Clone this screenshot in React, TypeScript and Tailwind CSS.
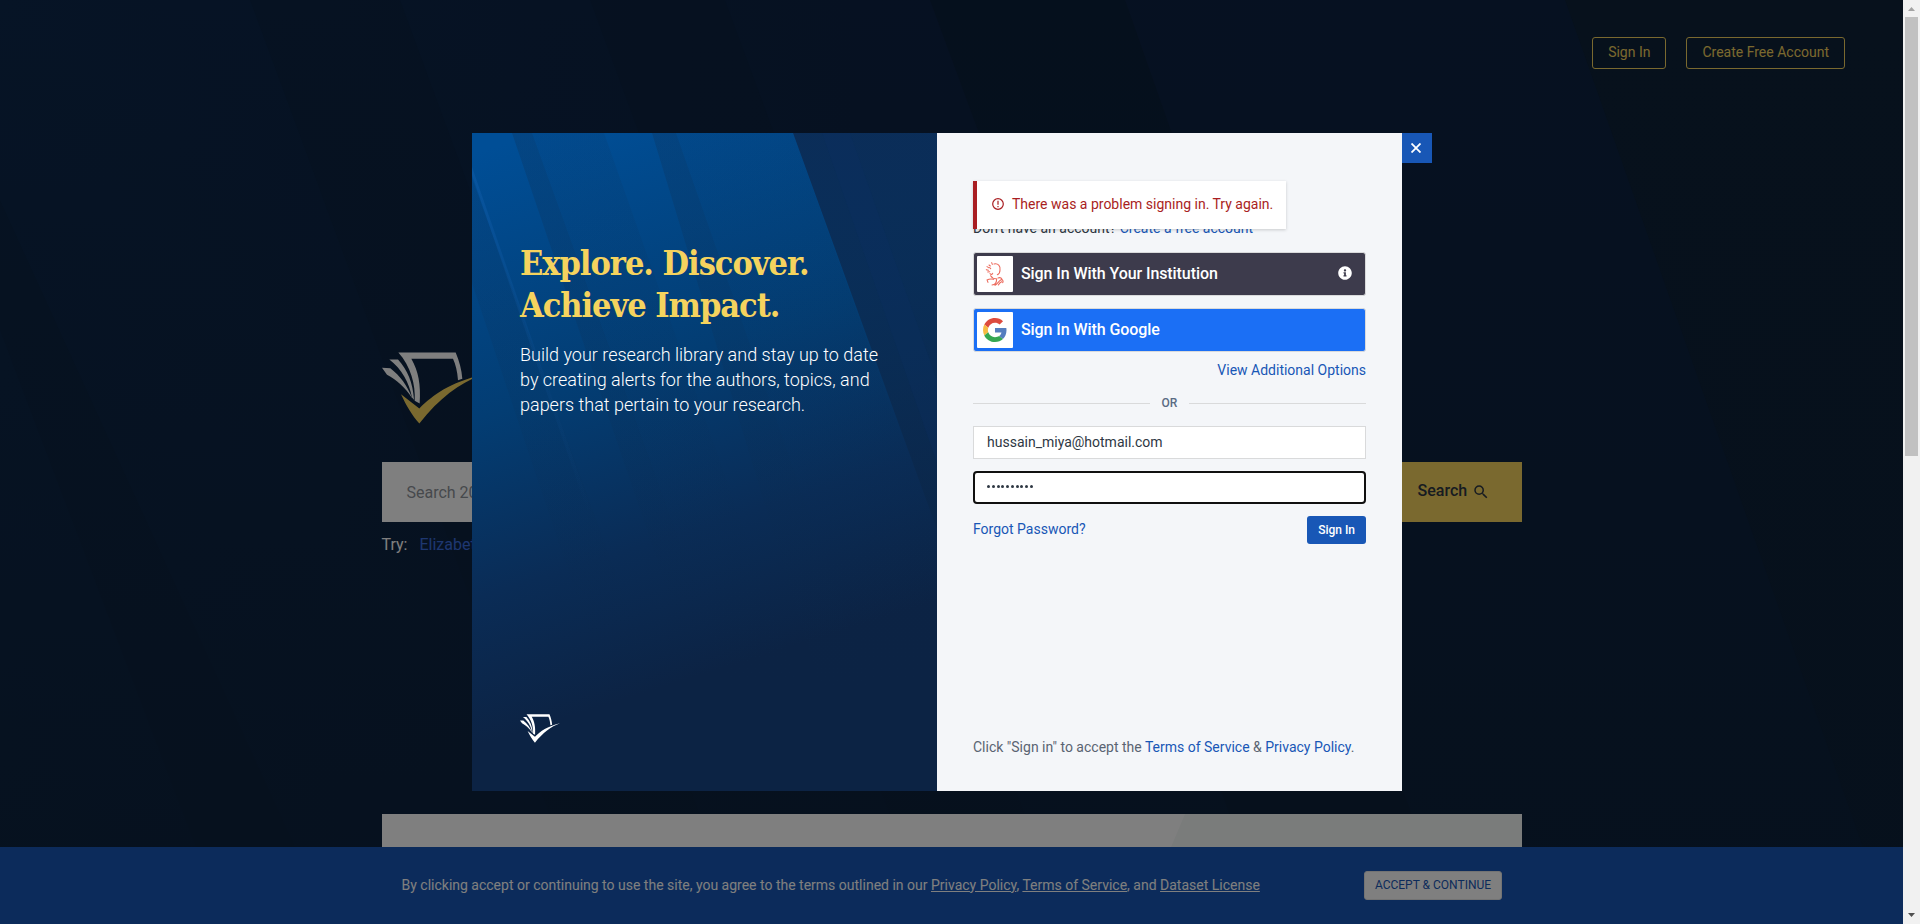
import type { ReactNode } from "react";
import { FaInfoCircle } from "react-icons/fa";
import { MdSearch } from "react-icons/md";

function Logo({ className, check }: { className: string; check: string }) {
  return (
    <svg className={className} viewBox="36 68 300 215" fill="white">
      <path d="M85 69 L257 69 C268 95 275 120 277 148 L264 152 C262 125 257 105 249 88 L124 88 C145 125 153 165 149 222 L134 214 C137 165 122 110 85 69Z" />
      <path d="M58 90 L84 90 C112 120 129 160 132 211 L126 204 C118 160 95 118 58 90Z" />
      <path d="M36 115 L61 116 C90 138 112 168 127 207 C104 172 80 152 51 136 Z" />
      <path fill={check} d="M93 194 L148 237 C190 195 240 160 335 136 C268 162 208 206 148 282 C125 255 110 230 93 194Z" />
    </svg>
  );
}

function GoogleMark() {
  return (
    <svg className="size-6" viewBox="0 0 48 48">
      <path fill="#dd4b3e" d="M24 9.5c3.54 0 6.71 1.22 9.21 3.6l6.85-6.85C35.9 2.38 30.47 0 24 0 14.62 0 6.51 5.38 2.56 13.22l7.98 6.19C12.43 13.72 17.74 9.5 24 9.5z" />
      <path fill="#557ebf" d="M46.98 24.55c0-1.57-.15-3.09-.38-4.55H24v9.02h12.94c-.58 2.96-2.26 5.48-4.78 7.18l7.73 6c4.51-4.18 7.09-10.36 7.09-17.65z" />
      <path fill="#f6bb42" d="M10.53 28.59c-.48-1.45-.76-2.99-.76-4.59s.27-3.14.76-4.59l-7.98-6.19C.92 16.46 0 20.12 0 24c0 3.88.92 7.54 2.56 10.78l7.97-6.19z" />
      <path fill="#36a752" d="M24 48c6.48 0 11.93-2.13 15.89-5.81l-7.73-6c-2.15 1.45-4.92 2.3-8.16 2.3-6.26 0-11.57-4.22-13.47-9.91l-7.98 6.19C6.51 42.62 14.62 48 24 48z" />
    </svg>
  );
}

function InstitutionMark() {
  return (
    <svg className="h-6 w-5" viewBox="0 0 54 72" fill="none" stroke="#ec6a5c" strokeWidth="3.2" strokeLinecap="round">
      <path d="M24 6 C36 3 44 12 42 24 C42 32 39 36 34 38" />
      <path d="M17 2 L19 7 M9 9 L13 12 M3 14 L8 17 M11 17 L14 20 M1 23 L7 25 M5 30 L11 29" />
      <path d="M12 35 C15 38 19 38 20 34 M14 41 C18 48 22 50 30 50" />
      <path d="M3 54 C10 50 16 50 23 52 M4 56 L6 61" />
      <path d="M18 69 C28 68 32 60 32 50 M27 70 C34 66 38 58 44 54 C49 50 53 58 50 62 M37 69 C40 64 43 60 47 59 M36 48 C41 46 46 48 48 52" />
    </svg>
  );
}

function PanelBackdrop() {
  return (
    <svg className="absolute inset-0 size-full" viewBox="0 0 465 658" preserveAspectRatio="none">
      <defs>
        <linearGradient id="panel" gradientUnits="userSpaceOnUse" x1="130" y1="-20" x2="300" y2="520">
          <stop offset="0" stopColor="#004e96" />
          <stop offset="0.45" stopColor="#033d73" />
          <stop offset="0.75" stopColor="#0a2c56" />
          <stop offset="1" stopColor="#0c2344" />
        </linearGradient>
        <linearGradient id="edge" x1="0" y1="0" x2="0" y2="1">
          <stop offset="0" stopColor="#0b2c56" stopOpacity="0.95" />
          <stop offset="0.6" stopColor="#0b2647" stopOpacity="0.6" />
          <stop offset="1" stopColor="#0b2344" stopOpacity="0" />
        </linearGradient>
        <linearGradient id="stripe" x1="0" y1="0" x2="0" y2="1">
          <stop offset="0" stopColor="#0b3560" stopOpacity="0.35" />
          <stop offset="1" stopColor="#0b2748" stopOpacity="0" />
        </linearGradient>
        <linearGradient id="glint" x1="0" y1="0" x2="0" y2="1">
          <stop offset="0" stopColor="#1560ae" stopOpacity="0.4" />
          <stop offset="0.6" stopColor="#1560ae" stopOpacity="0.12" />
          <stop offset="1" stopColor="#1560ae" stopOpacity="0" />
        </linearGradient>
      </defs>
      <rect width="465" height="658" fill="url(#panel)" />
      <polygon points="321,0 465,0 465,400 560,658" fill="url(#edge)" />
      <polygon points="40,0 60,0 240,500 210,500" fill="url(#stripe)" />
      <polygon points="60,0 132,0 330,560 260,560" fill="url(#stripe)" opacity="0.45" />
      <polygon points="180,0 204,0 400,560 350,560" fill="url(#stripe)" />
      <polygon points="204,0 321,0 520,560 400,560" fill="url(#stripe)" opacity="0.4" />
      <polygon points="0,150 0,45 180,540 130,540" fill="url(#stripe)" opacity="0.7" />
      <polygon points="0,42 0,34 120,380 116,380" fill="url(#glint)" />
      <polygon points="350,0 378,0 480,290 465,330" fill="#0d2f62" opacity="0.25" />
    </svg>
  );
}

function PageBackdrop() {
  return (
    <svg className="absolute inset-0 size-full" viewBox="0 0 1903 924" preserveAspectRatio="none">
      <defs>
        <linearGradient id="page" x1="0" y1="0" x2="1" y2="0">
          <stop offset="0" stopColor="#0d284c" />
          <stop offset="0.45" stopColor="#0d2344" />
          <stop offset="1" stopColor="#0d2342" />
        </linearGradient>
        <linearGradient id="fade" x1="0" y1="0" x2="0" y2="1">
          <stop offset="0" stopColor="#0d2138" stopOpacity="0" />
          <stop offset="1" stopColor="#0d2138" stopOpacity="0.7" />
        </linearGradient>
      </defs>
      <rect width="1903" height="924" fill="url(#page)" />
      <polygon points="930,0 1125,0 1450,924 1270,924" fill="#0c2036" opacity="0.7" />
      <polygon points="1565,0 1903,0 1903,924 1890,924" fill="#0e2238" />
      <polygon points="250,0 400,0 740,924 590,924" fill="#0b2038" opacity="0.3" />
      <polygon points="590,0 725,0 1065,924 930,924" fill="#0b2038" opacity="0.3" />
      <polygon points="0,200 0,330 225,924 330,924" fill="#0b2038" opacity="0.3" />
      <rect width="1903" height="924" fill="url(#fade)" />
    </svg>
  );
}

function HeaderButton({ children }: { children: ReactNode }) {
  return (
    <button className="h-8 rounded-[3px] border border-[#f5d35e] px-[15px] pb-[3px] text-sm text-[#f5d35e]">
      {children}
    </button>
  );
}

function ProviderButton({ tone, mark, label, info }: { tone: string; mark: ReactNode; label: string; info?: boolean }) {
  return (
    <button className={`flex h-11 w-full items-center rounded-[3px] border border-[#d9dadb] bg-clip-border px-[3px] text-base font-medium tracking-[-0.08px] text-white ${tone}`}>
      <span className="flex size-9 items-center justify-center rounded-[1px] bg-white">{mark}</span>
      <span className="ml-2 flex-1 text-left">{label}</span>
      {info && <FaInfoCircle className="mr-2.5 mb-0.5 size-[14px]" />}
    </button>
  );
}

function SignInModal() {
  return (
    <div className="absolute inset-0 flex items-center justify-center bg-black/50 pl-px">
      <div className="flex h-[658px] w-[960px] items-start">
        <section className="relative h-full w-[465px]">
          <PanelBackdrop />
          <div className="relative flex h-full flex-col px-12 pt-[109px] pb-12">
            <h1 className="whitespace-nowrap font-['DejaVu_Serif',serif] text-[34px] leading-[42px] font-bold tracking-[-1.03px] text-[#f5d35e] [font-stretch:condensed]">
              Explore. Discover.
              <br />
              Achieve Impact.
            </h1>
            <p className="mt-4 whitespace-nowrap text-lg leading-[25px] font-light text-white">
              Build your research library and stay up to date
              <br />
              by creating alerts for the authors, topics, and
              <br />
              papers that pertain to your research.
            </p>
            <Logo className="mt-auto h-[29px] w-10" check="white" />
          </div>
        </section>

        <section className="flex h-full w-[465px] flex-col bg-[#f4f6f9] px-9 pb-[34px] text-sm text-[#2e3743]">
          <div className="relative z-10 mt-12 flex h-12 w-[313px] shrink-0 items-center border-l-4 border-[#a91e22] bg-white pl-[15px] pb-0.5 text-[#a91e22] shadow-[0_1px_3px_rgba(0,0,0,0.18)]">
            <svg className="mr-2 size-3 shrink-0" viewBox="0 0 12 12" fill="none" stroke="currentColor" strokeWidth="1.2">
              <circle cx="6" cy="6" r="5.3" />
              <path d="M6 2.7V6.8M6 7.9V9.3" />
            </svg>
            <span className="whitespace-nowrap">There was a problem signing in. Try again.</span>
          </div>
          <p className="-mt-[11px] h-5 leading-5">
            Don't have an account? <a className="text-[#1857b6]">Create a free account</a>
          </p>
          <div className="mt-3.5 flex flex-col gap-3">
            <ProviderButton tone="bg-[#3d3b4c]" mark={<InstitutionMark />} label="Sign In With Your Institution" info />
            <ProviderButton tone="bg-[#1b6ff5]" mark={<GoogleMark />} label="Sign In With Google" />
          </div>
          <a className="mt-2 self-end leading-5 text-[#1857b6]">View Additional Options</a>
          <div className="mt-[13px] flex h-5 items-center gap-3 text-xs font-medium text-[#5a6b84]">
            <span className="h-px flex-1 bg-[#d9dadb]" />
            OR
            <span className="h-px flex-1 bg-[#d9dadb]" />
          </div>
          <div className="mt-[13px] flex h-[33px] items-center border border-[#d9dadb] bg-white px-[13px] pb-0.5">hussain_miya@hotmail.com</div>
          <div className="mt-3 flex h-[33px] items-center gap-[1.75px] rounded-[4px] border-2 border-[#101010] bg-white px-3 pb-0.5">
            {Array.from({ length: 10 }, (_, i) => (
              <span key={i} className="size-[3px] rounded-full bg-[#2e3743]" />
            ))}
          </div>
          <div className="mt-3 flex h-7 items-center justify-between">
            <a className="pb-0.5 text-[#1857b6]">Forgot Password?</a>
            <button className="h-7 rounded-[3px] bg-[#1857b6] px-[11px] text-xs font-medium text-white">Sign In</button>
          </div>
          <p className="mt-auto whitespace-nowrap leading-5 text-[#5a6472]">
            Click "Sign in" to accept the <a className="text-[#1857b6]">Terms of Service</a> &amp;{" "}
            <a className="text-[#1857b6]">Privacy Policy</a>.
          </p>
        </section>

        <button className="flex size-[30px] items-center justify-center bg-[#1857b6] pr-0.5 text-white">
          <svg className="size-[10px]" viewBox="0 0 10 10" stroke="currentColor" strokeWidth="1.8">
            <path d="M0.5 0.5L9.5 9.5M9.5 0.5L0.5 9.5" />
          </svg>
        </button>
      </div>
    </div>
  );
}

function ScrollBar() {
  return (
    <div className="flex h-full w-[17px] flex-col items-center justify-between bg-[#f1f1f1]">
      <div className="flex flex-col items-center">
        <svg className="h-[17px] w-[17px]" viewBox="0 0 17 17">
          <path d="M5 11L8.5 7L12 11Z" fill="#a3a3a3" />
        </svg>
        <div className="h-[439px] w-[13px] bg-[#c1c1c1]" />
      </div>
      <svg className="h-[17px] w-[17px]" viewBox="0 0 17 17">
        <path d="M5 6L8.5 10L12 6Z" fill="#505050" />
      </svg>
    </div>
  );
}

export default function App() {
  return (
    <div className="flex h-[924px] w-[1920px] overflow-hidden font-[Roboto,sans-serif]">
      <main className="relative h-full w-[1903px]">
        <PageBackdrop />
        <div className="relative flex h-full flex-col">
          <header className="flex justify-end gap-5 pt-[37px] pr-[58px]">
            <HeaderButton>Sign In</HeaderButton>
            <HeaderButton>Create Free Account</HeaderButton>
          </header>
          <div className="mx-auto mt-[283px] flex w-[1140px] flex-1 flex-col">
            <Logo className="h-[72px] w-[100px]" check="#f5d35e" />
            <div className="mt-[38px] flex h-[60px] shrink-0 bg-white">
              <div className="flex flex-1 items-center pt-px pl-[25px] text-base text-[#8d9299]">Search 20</div>
              <div className="flex w-[121px] items-center gap-[5px] bg-[#f5d35e] pl-[17px] pb-0.5 text-base font-medium text-[#2e3743]">
                Search
                <MdSearch className="mt-0.5 size-[18px]" />
              </div>
            </div>
            <div className="mt-[11px] flex gap-3 text-base leading-6 text-white">
              Try: <a className="text-[#3c6fe0]">Elizabeth</a>
            </div>
            <div className="mt-auto h-[33px] shrink-0 overflow-hidden bg-white">
              <svg className="size-full" viewBox="0 0 1140 33">
                <polygon points="803,0 1140,0 1140,33 789,33" fill="#f5f8f7" />
              </svg>
            </div>
          </div>
          <footer className="h-[77px] shrink-0 bg-[#1857b6]">
            <div className="mx-auto flex h-full w-[1101px] items-center justify-between text-sm text-white">
              <p className="whitespace-nowrap pb-0.5 pl-[0.5px]">
                By clicking accept or continuing to use the site, you agree to the terms outlined in our{" "}
                <a className="underline">Privacy Policy</a>, <a className="underline">Terms of Service</a>, and{" "}
                <a className="underline">Dataset License</a>
              </p>
              <button className="h-[29px] w-[138px] rounded-[3px] border border-[#e6e6e6] bg-white pb-px text-xs text-[#1857b6]">ACCEPT &amp; CONTINUE</button>
            </div>
          </footer>
        </div>
        <SignInModal />
      </main>
      <ScrollBar />
    </div>
  );
}
